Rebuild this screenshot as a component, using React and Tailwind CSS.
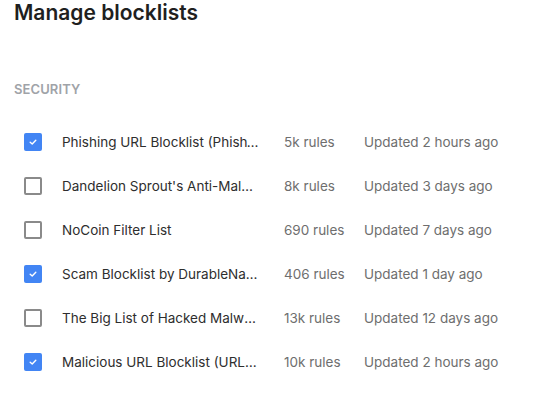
import React, { useState } from "react";

const LISTS = [
  { name: "Phishing URL Blocklist (PhishTank and OpenPhish)", rules: "5k rules", updated: "Updated 2 hours ago", on: true },
  { name: "Dandelion Sprout's Anti-Malware List", rules: "8k rules", updated: "Updated 3 days ago", on: false },
  { name: "NoCoin Filter List", rules: "690 rules", updated: "Updated 7 days ago", on: false },
  { name: "Scam Blocklist by DurableNapkin", rules: "406 rules", updated: "Updated 1 day ago", on: true },
  { name: "The Big List of Hacked Malware Web Sites", rules: "13k rules", updated: "Updated 12 days ago", on: false },
  { name: "Malicious URL Blocklist (URLHaus)", rules: "10k rules", updated: "Updated 2 hours ago", on: true },
];

function Checkbox({ checked, onChange }) {
  return (
    <button
      onClick={onChange}
      className={
        checked
          ? "w-[18px] h-[18px] rounded-[2px] bg-[#4285f4] flex items-center justify-center shrink-0"
          : "w-[18px] h-[18px] rounded-[2px] border-2 border-[#8a8a8a] bg-white shrink-0"
      }
    >
      {checked && (
        <svg width="10" height="8" viewBox="0 0 10 8" fill="none">
          <path d="M2.2 4.2 L4.2 6 L7.8 2.2" stroke="white" strokeWidth="1.4" strokeLinecap="round" strokeLinejoin="round" />
        </svg>
      )}
    </button>
  );
}

export default function App() {
  const [lists, setLists] = useState(LISTS);

  const toggle = (i) =>
    setLists((prev) => prev.map((l, j) => (j === i ? { ...l, on: !l.on } : l)));

  return (
    <div className="w-[539px] h-[403px] bg-white font-['Inter',sans-serif] overflow-hidden">
      <h1 className="pl-[14px] pt-0 text-[21px] leading-[26px] font-semibold text-[#1f1f1f]">
        Manage blocklists
      </h1>

      <div className="pl-[14px] mt-[55px] text-[13px] leading-[16px] font-semibold text-[#9fa3a8] tracking-[0.1px]">
        SECURITY
      </div>

      {/* rows */}
      <div className="mt-[23px]">
        {lists.map((l, i) => (
          <div key={i} className="h-[44px] flex items-center pl-[24px] text-[13.5px]">
            <Checkbox checked={l.on} onChange={() => toggle(i)} />
            <div className="ml-[20px] w-[200px] flex-none truncate text-[#2e2e2e]">{l.name}</div>
            <div className="ml-[22px] w-[80px] flex-none whitespace-nowrap text-[#6e6e6e]">{l.rules}</div>
            <div className="whitespace-nowrap text-[#6e6e6e]">{l.updated}</div>
          </div>
        ))}
      </div>
    </div>
  );
}
